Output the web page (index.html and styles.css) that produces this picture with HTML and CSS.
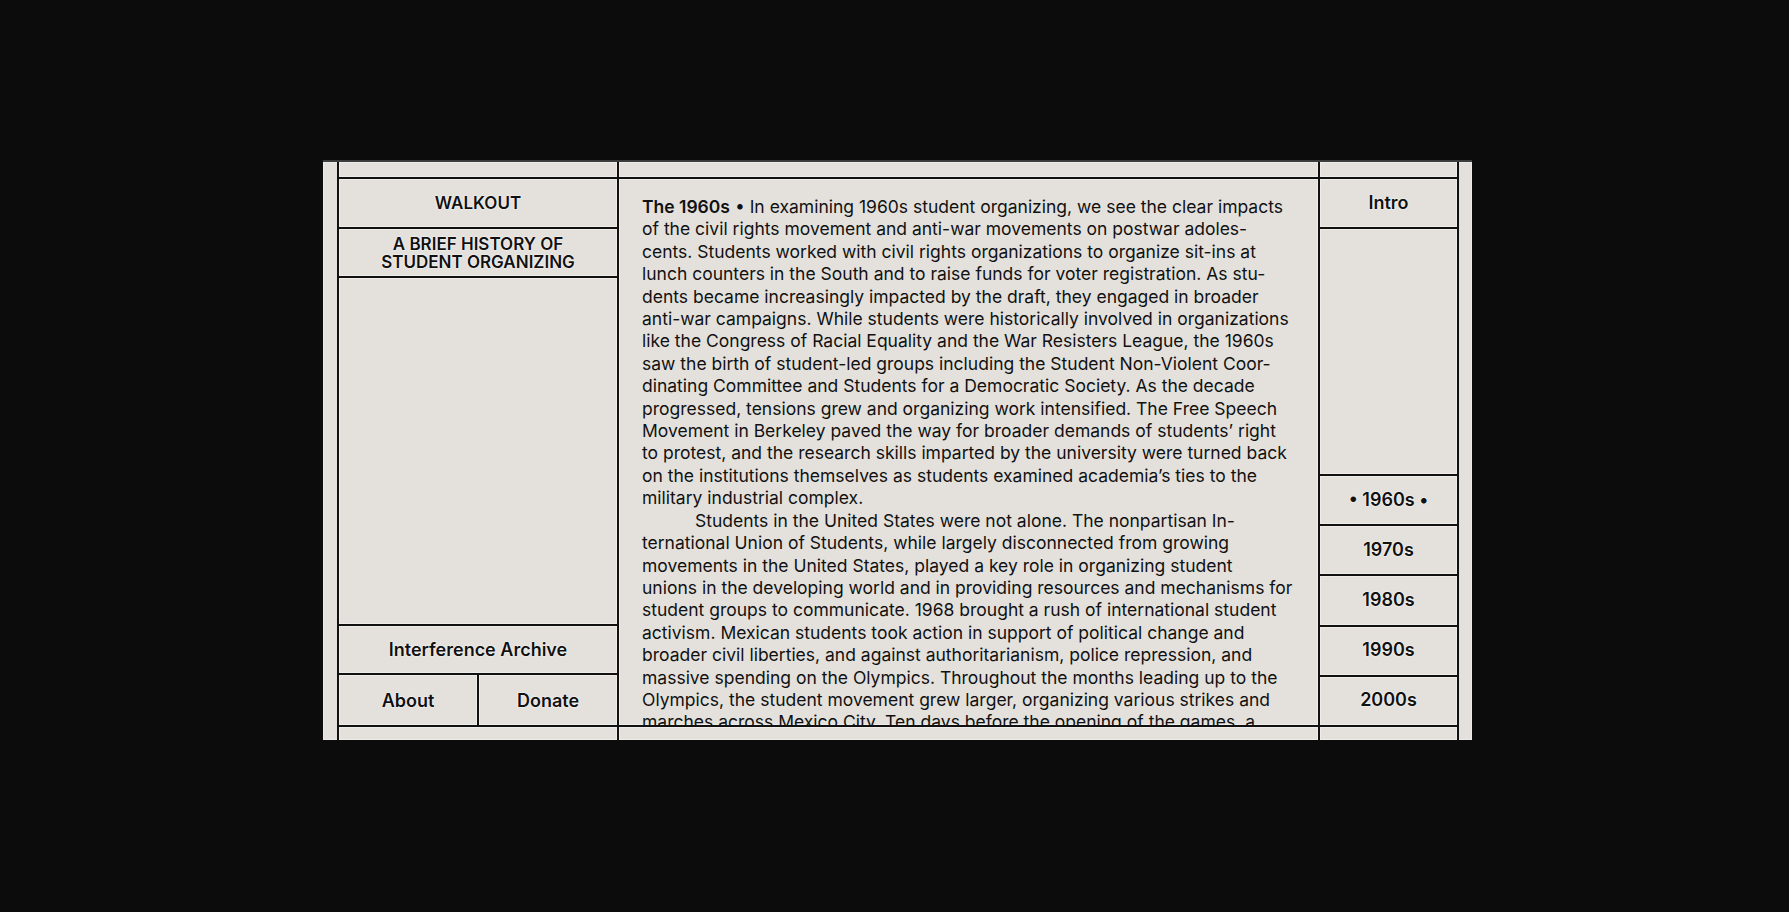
FILE: index.html
```html
<!DOCTYPE html>
<html lang="en">
<head>
    <meta charset="UTF-8">
    <meta name="viewport" content="width=device-width, initial-scale=1.0">
    <title>Walkout: A Brief History of Student Organizing</title>
    <link rel="stylesheet" href="styles.css">
</head>
<body>
    <div class="frame">
        <div class="grid">
            <aside class="col col-left">
                <div class="cell cap-top"></div>
                <div class="cell label brand">WALKOUT</div>
                <div class="cell label subtitle">A BRIEF HISTORY OF<br>STUDENT ORGANIZING</div>
                <div class="cell fill"></div>
                <a class="cell label archive" href="#">Interference Archive</a>
                <div class="split">
                    <a class="cell label" href="#">About</a>
                    <a class="cell label" href="#">Donate</a>
                </div>
                <div class="cell cap-bottom"></div>
            </aside>

            <main class="col col-main">
                <div class="cell cap-top"></div>
                <div class="cell reading">
                    <p><strong>The 1960s</strong> &bull; In examining 1960s student organizing, we see the clear impacts<br>of the civil rights movement and anti-war movements on postwar adoles-<br>cents. Students worked with civil rights organizations to organize sit-ins at<br>lunch counters in the South and to raise funds for voter registration. As stu-<br>dents became increasingly impacted by the draft, they engaged in broader<br>anti-war campaigns. While students were historically involved in organizations<br>like the Congress of Racial Equality and the War Resisters League, the 1960s<br>saw the birth of student-led groups including the Student Non-Violent Coor-<br>dinating Committee and Students for a Democratic Society. As the decade<br>progressed, tensions grew and organizing work intensified. The Free Speech<br>Movement in Berkeley paved the way for broader demands of students&rsquo; right<br>to protest, and the research skills imparted by the university were turned back<br>on the institutions themselves as students examined academia&rsquo;s ties to the<br>military industrial complex.</p>
                    <p class="indent">Students in the United States were not alone. The nonpartisan In-<br>ternational Union of Students, while largely disconnected from growing<br>movements in the United States, played a key role in organizing student<br>unions in the developing world and in providing resources and mechanisms for<br>student groups to communicate. 1968 brought a rush of international student<br>activism. Mexican students took action in support of political change and<br>broader civil liberties, and against authoritarianism, police repression, and<br>massive spending on the Olympics. Throughout the months leading up to the<br>Olympics, the student movement grew larger, organizing various strikes and<br>marches across Mexico City. Ten days before the opening of the games, a</p>
                </div>
                <div class="cell cap-bottom"></div>
            </main>

            <nav class="col col-right">
                <div class="cell cap-top"></div>
                <a class="cell label" href="#">Intro</a>
                <div class="cell fill"></div>
                <a class="cell label year active" href="#">&bull; 1960s &bull;</a>
                <a class="cell label year" href="#">1970s</a>
                <a class="cell label year" href="#">1980s</a>
                <a class="cell label year" href="#">1990s</a>
                <a class="cell label year" href="#">2000s</a>
                <div class="cell cap-bottom"></div>
            </nav>
        </div>
    </div>
</body>
</html>
```

FILE: styles.css
```css
body {
    margin: 0;
    padding: 160px 0 0 323px;
    background-color: #0c0c0c;
    font-family: 'Inter', 'Noto Sans', sans-serif;
    color: #111;
}
.frame {
    width: 1149px;
    height: 580px;
    box-sizing: border-box;
    padding: 0 13px 0 14px;
    background-color: #e4e1dd;
    border-top: 2px solid #3c3c3c;
    box-shadow: inset 0 0 0 1px rgba(255,255,255,0.35);
}
.grid {
    display: grid;
    grid-template-columns: 278px 699px 137px;
    gap: 2px;
    height: 100%;
    padding: 0 2px;
    background-color: #111;
}
.col {
    display: flex;
    flex-direction: column;
    gap: 2px;
    min-height: 0;
}
.cell {
    background-color: #e4e1dd;
    box-shadow: inset 0 0 0 1px rgba(255,255,255,0.4);
}
.cap-top {
    height: 15px;
    flex: none;
}
.cap-bottom {
    height: 13px;
    flex: none;
}
.fill {
    flex: 1;
}
.label {
    display: flex;
    align-items: center;
    justify-content: center;
    height: 47.7px;
    flex: none;
    font-size: 18px;
    font-weight: 600;
    color: #111;
    text-decoration: none;
    text-align: center;
    text-shadow: 0 0 2px #fff, 0 0 1px #fff;
}
.brand {
    font-size: 17px;
}
.subtitle {
    font-size: 17px;
    line-height: 18px;
}
.archive {
    height: 47px;
}
.split {
    display: grid;
    grid-template-columns: 138px 138px;
    gap: 2px;
    flex: none;
}
.split .label {
    height: 50px;
}
.year {
    box-sizing: border-box;
    height: 48.2px;
    padding-bottom: 2px;
}
.reading {
    flex: 1;
    min-height: 0;
    overflow: hidden;
    padding: 17px 23px 0 23px;
    font-size: 17.5px;
    line-height: 22.4px;
    white-space: nowrap;
}
.reading p {
    margin: 0;
}
.reading strong {
    font-weight: 600;
}
.reading .indent {
    text-indent: 53px;
}
```
